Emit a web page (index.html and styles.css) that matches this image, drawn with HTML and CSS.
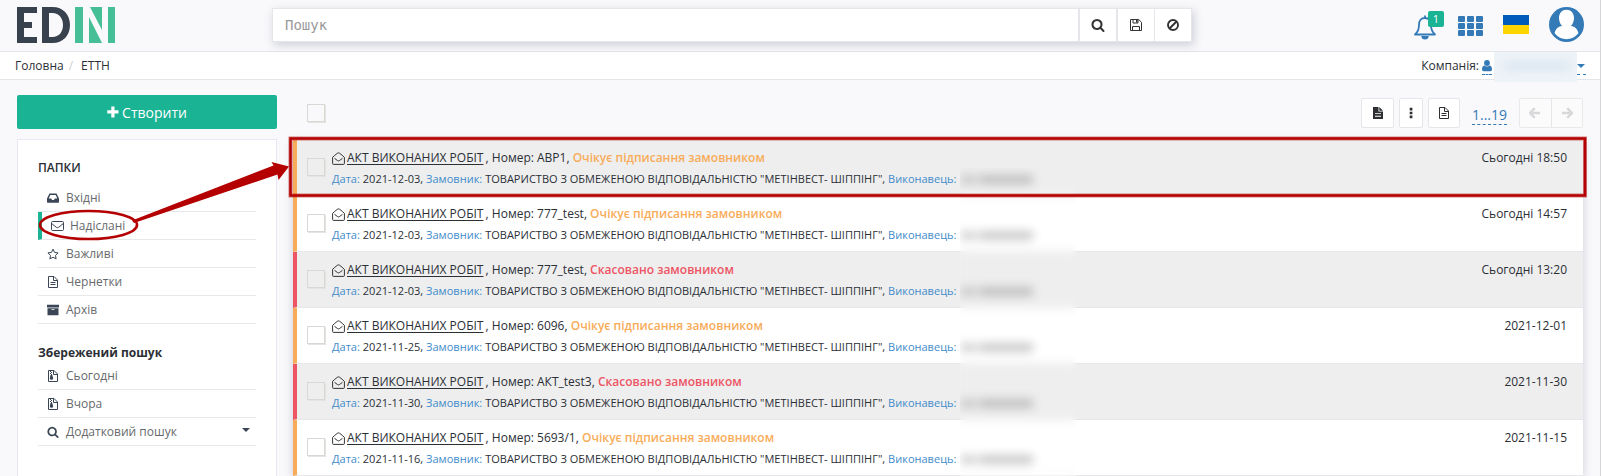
FILE: index.html
```
<!DOCTYPE html>
<html lang="uk">
<head>
<meta charset="utf-8">
<title>EDIN</title>
<link rel="stylesheet" href="styles.css">
</head>
<body>
<svg class="defs" width="0" height="0">
  <symbol id="search" viewBox="0 0 1792 1792"><path d="M1216 832q0-185-131.5-316.5t-316.5-131.5-316.5 131.5-131.5 316.5 131.5 316.5 316.5 131.5 316.5-131.5 131.5-316.5zm512 832q0 52-38 90t-90 38q-54 0-90-38l-343-342q-179 124-399 124-143 0-273.5-55.5t-225-150-150-225-55.5-273.5 55.5-273.5 150-225 225-150 273.5-55.5 273.5 55.5 225 150 150 225 55.5 273.5q0 220-124 399l343 343q37 37 37 90z"/></symbol>
  <symbol id="save" viewBox="0 0 14 14"><path d="M1.500 1.500h8.200l2.800 2.800v8.200h-11zM3.500 12.500v-4h7v4M4 1.500v3.500h5v-3.500" fill="none" stroke="currentColor"/><path d="M7 2h1.500v2.500H7z"/></symbol>
  <symbol id="ban" viewBox="0 0 14 14"><circle cx="7" cy="7" r="5" fill="none" stroke="currentColor" stroke-width="1.900"/><path d="M3.500 10.500l7-7" stroke="currentColor" stroke-width="1.900"/></symbol>
  <symbol id="inbox" viewBox="0 0 12 12"><path fill-rule="evenodd" d="M2.500 1.500h7L12 6.500V10q0 .7-.7.7H.7Q0 10.700 0 10V6.500zM3.300 3L1.700 6.600h2.500l.8 1.500h2l.8-1.500h2.500L8.700 3z"/></symbol>
  <symbol id="envelope" viewBox="0 0 13 12"><rect x=".5" y="1.500" width="12" height="9" rx="1" fill="none" stroke="currentColor"/><path d="M.7 3.500l4.500 3.700q1.300.9 2.600 0l4.500-3.700" fill="none" stroke="currentColor"/></symbol>
  <symbol id="star" viewBox="0 0 12 12"><path d="M6 1.200l1.500 3.200 3.600.5-2.600 2.500.6 3.500L6 9.200l-3.100 1.700.6-3.500L.9 4.900l3.600-.5z" fill="none" stroke="currentColor" stroke-linejoin="round"/></symbol>
  <symbol id="file" viewBox="0 0 12 14"><path d="M1.500 1.500h5.500l3.500 3.500v7.500h-9zM6.500 1.500v4h4M3.500 7.500h5M3.500 9.500h5" fill="none" stroke="currentColor"/></symbol>
  <symbol id="filefull" viewBox="0 0 12 14"><path fill-rule="evenodd" d="M1 1h5.500v4.500H11V13H1zM7.300 1L11 4.700H7.300zM3 7.200v.9h6v-.9zM3 9.800v.9h6v-.9z"/></symbol>
  <symbol id="zip" viewBox="0 0 12 14"><path d="M1.500 1.500h5.500l3.500 3.500v7.500h-9zM6.500 1.500v4h4" fill="none" stroke="currentColor"/><path d="M3 2h1v1H3zM4 3h1v1H4zM3 4h1v1H3zM4 5h1v1H4zM3.500 6h1.700l1 3.300q0 1.500-1.700 1.500T2.800 9.300z"/></symbol>
  <symbol id="archive" viewBox="0 0 12 12"><path fill-rule="evenodd" d="M0 .7h12v2.800H0zM.5 4.200h11v7.100H.5zM4.500 5.200v.9h3v-.9z"/></symbol>
  <symbol id="open" viewBox="0 0 13 13"><path d="M.6 5.300v6.200q0 .9.900.9h10q.9 0 .9-.9V5.300Q10.500 3.500 7.700 1.300q-1.200-.9-2.400 0Q2.500 3.500.6 5.300zM2.500 6.300l2.900 2.200q1.100.8 2.200 0l2.900-2.200" fill="none" stroke="currentColor" stroke-width="1"/></symbol>
  <symbol id="arrow" viewBox="0 0 12 12"><path d="M6.200 1.200L11 6l-4.800 4.800M11 6H1" fill="none" stroke="currentColor" stroke-width="2.400"/></symbol>
</svg>

<header class="top">
  <svg class="logo" width="98" height="36" viewBox="0 0 98 36"><path fill="#38424f" d="M0 0h20v6H7v9h8v6H7v9h13v6H0zM25 0h10.500C46 0 53 7.500 53 18s-7 18-17.500 18H25zm7 6v24h3.500C42 30 46 25 46 18S42 6 35.500 6z" fill-rule="evenodd"/><path fill="#46bf96" d="M58 0h8v36h-8zM91 0h7v36h-7zM73 0h12v23zM72 10l13 26H72z"/></svg>
  <div class="search">
    <div class="field">Пошук</div>
    <div class="sbtn"><svg width="14" height="14"><use href="#search"/></svg></div>
    <div class="sbtn"><svg width="14" height="14"><use href="#save"/></svg></div>
    <div class="sbtn last"><svg width="14" height="14"><use href="#ban"/></svg></div>
  </div>
  <div class="tools">
    <div class="bell"><svg width="24" height="26" viewBox="0 0 24 26"><path d="M12 1.500v2.500M2 20.500Q6 17 6 11q0-7 6-7t6 7q0 6 4 9.500z" fill="none" stroke="currentColor" stroke-width="1.800" stroke-linejoin="round"/><path d="M8.200 22h7.600q-.5 3.500-3.800 3.500T8.200 22z"/></svg><span class="badge">1</span></div>
    <svg class="grid" width="26" height="20" viewBox="0 0 26 20"><path d="M1 0h5q1 0 1 1v4q0 1-1 1H1Q0 6 0 5V1q0-1 1-1zm9 0h5q1 0 1 1v4q0 1-1 1h-5q-1 0-1-1V1q0-1 1-1zm9 0h5q1 0 1 1v4q0 1-1 1h-5q-1 0-1-1V1q0-1 1-1zM1 7h5q1 0 1 1v4q0 1-1 1H1q-1 0-1-1V8q0-1 1-1zm9 0h5q1 0 1 1v4q0 1-1 1h-5q-1 0-1-1V8q0-1 1-1zm9 0h5q1 0 1 1v4q0 1-1 1h-5q-1 0-1-1V8q0-1 1-1zM1 14h5q1 0 1 1v4q0 1-1 1H1q-1 0-1-1v-4q0-1 1-1zm9 0h5q1 0 1 1v4q0 1-1 1h-5q-1 0-1-1v-4q0-1 1-1zm9 0h5q1 0 1 1v4q0 1-1 1h-5q-1 0-1-1v-4q0-1 1-1z"/></svg>
    <div class="flag"></div>
    <svg class="user" width="35" height="35" viewBox="0 0 35 35"><circle cx="17.500" cy="17.500" r="17.500"/><path fill="#fff" d="M17.500 2.800c4.500 0 7.500 3.400 7.500 8.200 0 3.200-1.200 6.300-3.200 8 4.500.6 7 3.500 7.600 7.300C26.500 30.200 22 32.300 17.500 32.300S8.500 30.200 5.600 26.300c.6-3.800 3.100-6.700 7.600-7.300-2-1.700-3.200-4.800-3.200-8 0-4.800 3-8.200 7.500-8.200z"/></svg>
  </div>
</header>

<nav class="crumbs">
  <span>Головна</span><span class="sep">/</span><span>ЕТТН</span>
  <div class="company">Компанія:<span class="who"><svg width="10" height="12" viewBox="0 0 10 12"><circle cx="5" cy="3" r="2.900"/><path d="M2.300 5.500Q5 7.500 7.700 5.500 10 6 10 9.500q0 1.700-1.500 1.700h-7Q0 11.200 0 9.500 0 6 2.300 5.500z"/></svg></span><span class="mask"><i></i></span><span class="who drop"><b class="caret"></b></span></div>
</nav>

<div class="page">
  <aside>
    <div class="create"><svg width="12" height="12" viewBox="0 0 12 12"><path d="M4.300.5h3.200v3.800h4v3.200h-4v4H4.300v-4h-4V4.300h4z"/></svg>Створити</div>
    <div class="panel">
      <h4>ПАПКИ</h4>
      <div class="item"><svg width="12" height="12"><use href="#inbox"/></svg>Вхідні</div>
      <div class="item active"><svg width="13" height="12"><use href="#envelope"/></svg>Надіслані</div>
      <div class="item"><svg width="12" height="12"><use href="#star"/></svg>Важливі</div>
      <div class="item"><svg width="12" height="14"><use href="#file"/></svg>Чернетки</div>
      <div class="item"><svg width="12" height="12"><use href="#archive"/></svg>Архів</div>
      <h4 class="saved">Збережений пошук</h4>
      <div class="item"><svg width="12" height="14"><use href="#zip"/></svg>Сьогодні</div>
      <div class="item"><svg width="12" height="14"><use href="#zip"/></svg>Вчора</div>
      <div class="item"><svg width="12" height="12"><use href="#search"/></svg>Додатковий пошук<b class="caret"></b></div>
    </div>
  </aside>
  <main>
    <div class="bar">
      <span class="check"></span>
      <div class="btn b1"><svg width="12" height="14"><use href="#filefull"/></svg></div>
      <div class="btn b2"><svg width="4" height="12" viewBox="0 0 4 12"><path d="M.7.800h2.700v2.600H.7zM.7 4.700h2.700v2.600H.7zM.7 8.600h2.700v2.600H.7z"/></svg></div>
      <div class="btn b3"><svg width="12" height="14"><use href="#file"/></svg></div>
      <span class="pages">1...19</span>
      <div class="pager"><div><svg class="flip" width="12" height="12"><use href="#arrow"/></svg></div><div><svg width="12" height="12"><use href="#arrow"/></svg></div></div>
    </div>
    <div class="list">
      <div class="row odd"><span class="check"></span><div class="doc"><p class="t"><svg width="13" height="13"><use href="#open"/></svg><u>АКТ ВИКОНАНИХ РОБІТ</u> , Номер: АВР1, <em>Очікує підписання замовником</em></p><p class="m"><a>Дата:</a> 2021-12-03, <a>Замовник:</a> ТОВАРИСТВО З ОБМЕЖЕНОЮ ВІДПОВІДАЛЬНІСТЮ "МЕТІНВЕСТ- ШІППІНГ", <a>Виконавець:</a></p></div><time>Сьогодні 18:50</time></div>
      <div class="row"><span class="check"></span><div class="doc"><p class="t"><svg width="13" height="13"><use href="#open"/></svg><u>АКТ ВИКОНАНИХ РОБІТ</u> , Номер: 777_test, <em>Очікує підписання замовником</em></p><p class="m"><a>Дата:</a> 2021-12-03, <a>Замовник:</a> ТОВАРИСТВО З ОБМЕЖЕНОЮ ВІДПОВІДАЛЬНІСТЮ "МЕТІНВЕСТ- ШІППІНГ", <a>Виконавець:</a></p></div><time>Сьогодні 14:57</time></div>
      <div class="row odd red"><span class="check"></span><div class="doc"><p class="t"><svg width="13" height="13"><use href="#open"/></svg><u>АКТ ВИКОНАНИХ РОБІТ</u> , Номер: 777_test, <em>Скасовано замовником</em></p><p class="m"><a>Дата:</a> 2021-12-03, <a>Замовник:</a> ТОВАРИСТВО З ОБМЕЖЕНОЮ ВІДПОВІДАЛЬНІСТЮ "МЕТІНВЕСТ- ШІППІНГ", <a>Виконавець:</a></p></div><time>Сьогодні 13:20</time></div>
      <div class="row"><span class="check"></span><div class="doc"><p class="t"><svg width="13" height="13"><use href="#open"/></svg><u>АКТ ВИКОНАНИХ РОБІТ</u> , Номер: 6096, <em>Очікує підписання замовником</em></p><p class="m"><a>Дата:</a> 2021-11-25, <a>Замовник:</a> ТОВАРИСТВО З ОБМЕЖЕНОЮ ВІДПОВІДАЛЬНІСТЮ "МЕТІНВЕСТ- ШІППІНГ", <a>Виконавець:</a></p></div><time>2021-12-01</time></div>
      <div class="row odd red"><span class="check"></span><div class="doc"><p class="t"><svg width="13" height="13"><use href="#open"/></svg><u>АКТ ВИКОНАНИХ РОБІТ</u> , Номер: АКТ_test3, <em>Скасовано замовником</em></p><p class="m"><a>Дата:</a> 2021-11-30, <a>Замовник:</a> ТОВАРИСТВО З ОБМЕЖЕНОЮ ВІДПОВІДАЛЬНІСТЮ "МЕТІНВЕСТ- ШІППІНГ", <a>Виконавець:</a></p></div><time>2021-11-30</time></div>
      <div class="row"><span class="check"></span><div class="doc"><p class="t"><svg width="13" height="13"><use href="#open"/></svg><u>АКТ ВИКОНАНИХ РОБІТ</u> , Номер: 5693/1, <em>Очікує підписання замовником</em></p><p class="m"><a>Дата:</a> 2021-11-16, <a>Замовник:</a> ТОВАРИСТВО З ОБМЕЖЕНОЮ ВІДПОВІДАЛЬНІСТЮ "МЕТІНВЕСТ- ШІППІНГ", <a>Виконавець:</a></p></div><time>2021-11-15</time></div>
      <div class="veil"><i></i><i></i><i></i><i></i><i></i><i></i></div>
    </div>
  </main>
</div>

<svg class="marks" width="1601" height="476" viewBox="0 0 1601 476">
  <g fill="none" stroke="#b40000"><rect x="290.500" y="138.500" width="1294.500" height="57" stroke-width="4" stroke-opacity=".5"/><rect x="290.500" y="138.500" width="1294.500" height="57" stroke-width="2.400"/><ellipse cx="88.500" cy="225" rx="48.500" ry="14" stroke-width="2.600"/></g>
  <path fill="#b40000" d="M132 220.500L273.500 165.500 271.500 162 289 166.500 278.500 180 277.500 174.500 134 223z"/>
</svg>
</body>
</html>
```
FILE: styles.css
```
* { box-sizing: border-box; }
body { margin: 0; width: 1601px; height: 476px; overflow: hidden; position: relative; background: #f9f9fb; color: #2b2f36; font: 12px/16px "Open Sans", "Noto Sans", sans-serif; border-right: 1px solid #d5d5d8; }
svg { fill: currentColor; flex: none; display: block; }
.defs { position: absolute; }
p, h4 { margin: 0; }

.top { height: 52px; border-bottom: 1px solid #e4e5e8; display: flex; align-items: flex-start; padding-left: 17px; }
.logo { margin-top: 7px; }
.search { margin: 8px 0 0 157px; width: 920px; height: 34px; display: flex; background: #fff; border: 1px solid #e5e6e9; box-shadow: 2px 3px 9px rgba(90, 95, 130, .28); }
.field { flex: 1; padding-left: 12px; line-height: 32px; font-family: "DejaVu Sans Mono", monospace; font-size: 14px; color: #999; }
.sbtn { width: 38px; border-left: 2px solid #e5e6e9; display: flex; align-items: center; justify-content: center; color: #333; }
.last { width: 37px; border-left-width: 1px; }
.tools { display: flex; align-items: flex-start; margin-left: 221px; color: #337ab7; }
.bell { position: relative; margin-top: 14px; width: 45px; }
.badge { position: absolute; left: 15px; top: -3px; width: 16px; height: 16px; border-radius: 2px; background: #1ab394; color: #fff; font-size: 11px; line-height: 16px; text-align: center; }
.grid { margin-top: 16px; }
.flag { margin: 15px 0 0 19px; width: 26px; height: 19px; background: linear-gradient(#005bbb 50%, #ffd500 50%); }
.user { margin: 7px 0 0 20px; }

.crumbs { height: 28px; background: #fff; border-bottom: 1px solid #e4e5e8; display: flex; padding-left: 15px; line-height: 28px; }
.sep { color: #ccc; margin: 0 8px 0 5px; }
.company { margin-left: auto; display: flex; padding-right: 14px; }
.who { color: #337ab7; margin-left: 3px; width: 10px; height: 23px; border-bottom: 1px dashed #337ab7; }
.who svg { margin-top: 8px; }
.mask { width: 83px; height: 30px; margin-left: 2px; background: #eef3f8; overflow: hidden; padding: 10px 10px; }
.mask i { display: block; width: 66px; height: 8px; background: #d9e5f0; filter: blur(5px); }
.drop { margin-left: 0; width: 9px; padding-top: 12px; }
.caret { display: block; width: 0; border: 4px solid transparent; border-top-color: currentColor; border-bottom: 0; }

.page { display: flex; padding: 15px 0 0 17px; }
aside { width: 260px; }
.create { height: 34px; background: #1ab394; border-radius: 2px; color: #fff; font-size: 14px; display: flex; align-items: center; justify-content: center; gap: 3px; padding-top: 1px; }
.create svg { margin-top: -1px; }
.panel { margin-top: 10px; height: 360px; background: #fff; border: 1px solid #e7e8f2; padding: 19px 20px 0; color: #676a6c; }
h4 { font-size: 12px; line-height: 17px; font-weight: 600; color: #2b2f36; margin-bottom: 8px; }
.item { height: 28px; border-bottom: 1px solid #e7e8ea; display: flex; align-items: center; gap: 7px; padding-left: 9px; }
.item svg { color: #3a4656; }
.item .caret { margin-left: auto; margin-right: 6px; margin-top: -3px; color: #3a4656; }
.active { border-left: 4px solid #1ab394; gap: 6px; }
.saved { margin: 20px 0 1px; font-weight: 700; }

main { width: 1290px; margin-left: 16px; }
.bar { height: 45px; display: flex; align-items: flex-start; padding: 3px 0 0 14px; }
.check { flex: none; width: 18px; height: 18px; border: 1px solid #d8d8d4; box-shadow: 1px 1px 0 #e5e4e0; }
.bar .check { margin: 6px auto 0 0; }
.btn { height: 30px; background: #fff; border: 1px solid #e6e6ea; border-radius: 2px; display: flex; align-items: center; justify-content: center; color: #2d2f33; }
.b1 { width: 33px; }
.b2 { width: 24px; margin-left: 5px; }
.b3 { width: 32px; margin-left: 5px; }
.pages { margin: 4px 12px 0; width: 35px; height: 23px; font-size: 14px; line-height: 26px; color: #337ab7; border-bottom: 1px dashed #337ab7; }
.pager { height: 30px; width: 64px; display: flex; border: 1px solid #e9e9ec; border-radius: 2px; color: #d8d8da; background: #fbfbfc; }
.pager div { flex: 1; display: flex; align-items: center; justify-content: center; }
.pager div + div { border-left: 1px solid #e6e6ea; }
.flip { transform: scaleX(-1); }

.list { position: relative; box-shadow: 0 2px 9px rgba(90, 95, 130, .28); }
.row { height: 56px; background: #fff; border-left: 4px solid #f8ac59; border-bottom: 1px solid #e7e7e9; display: flex; padding: 9px 16px 0 10px; }
.odd { background: #eee; }
.red { border-left-color: #ed5565; }
.row .check { margin: 9px 7px 0 0; }
.doc { flex: 1; }
.t { display: flex; white-space: pre; align-items: flex-start; line-height: 17px; }
time { line-height: 17px; }
.t svg { margin: 3px 2px 0 0; color: #333; }
.t u { text-underline-offset: 2px; margin-right: -1px; }
em { font-style: normal; font-weight: 600; color: #f8ac59; }
.red em { color: #ed5565; }
.m { font-size: 11px; line-height: 18px; margin-top: 4px; letter-spacing: .015px; }
.m a { color: #428bca; }
.veil { position: absolute; left: 667px; top: 28px; width: 116px; height: 308px; display: grid; grid-template-rows: repeat(6, 56px); overflow: hidden; backdrop-filter: blur(5px); padding-left: 1px; }
.veil i { width: 72px; height: 9px; margin-top: 7px; background: linear-gradient(90deg, #999 0 11px, #bbb 13px 19px, #888 21px); opacity: .45; filter: blur(5px); }
.marks { position: absolute; left: 0; top: 0; pointer-events: none; }
```
